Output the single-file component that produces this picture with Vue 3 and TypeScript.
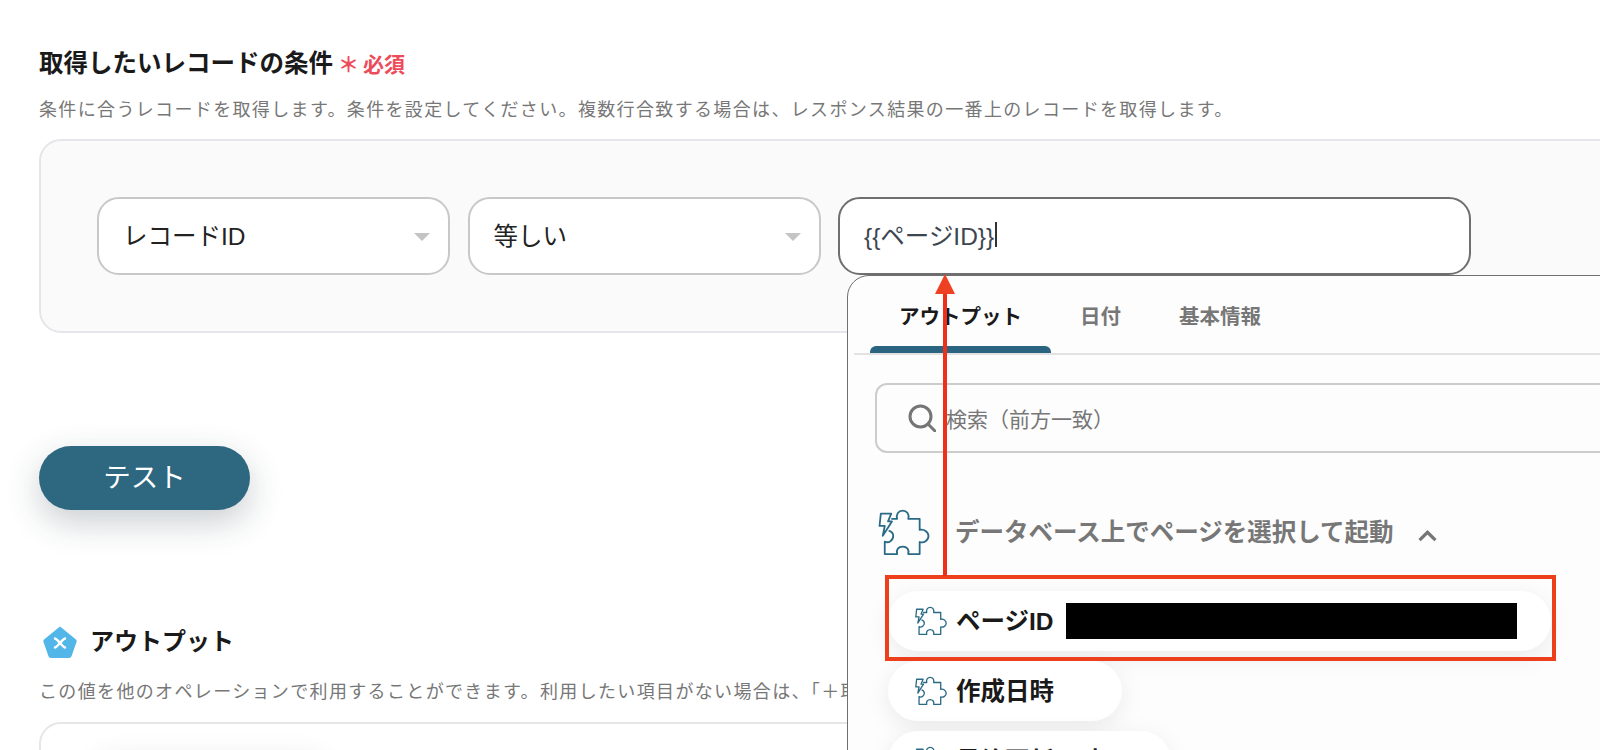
<script setup lang="ts">
const tokenText: string = '{{ページID}}'
const tabs: string[] = ['アウトプット', '日付', '基本情報']
const outputs: { label: string; value?: boolean }[] = [
  { label: 'ページID', value: true },
  { label: '作成日時' },
  { label: '最終更新日時' },
]
</script>

<template>
  <div class="page">
    <svg class="defs" width="0" height="0" aria-hidden="true">
      <symbol id="puzzle" viewBox="38 40 158 144">
        <path d="M78 70 H96 C92 56 100 45 113 45 C126 45 134 56 130 70 H165 V104 C178 100 192 110 192 123 C192 136 178 146 165 141 V178 H130 C134 164 126 155 113 155 C100 155 92 164 96 178 H58 V140 C70 146 84 136 84 123 C84 114 78 108 70 106" />
        <path d="M46 54 H78 L68 78 H80 L52 122 L58 92 H42 Z" />
      </symbol>
    </svg>

    <section class="section">
      <h2 class="title">取得したいレコードの条件<span class="req"><span class="star">＊</span>必須</span></h2>
      <p class="note first">条件に合うレコードを取得します。条件を設定してください。複数行合致する場合は、レスポンス結果の一番上のレコードを取得します。</p>
      <div class="cond-box">
        <div class="field select">レコードID</div>
        <div class="field select">等しい</div>
        <div class="field input">{{ tokenText }}<span class="caret"></span></div>
      </div>
    </section>

    <button class="test-btn" type="button"><span>テスト</span></button>

    <section class="output">
      <div class="out-head">
        <svg class="pentagon" viewBox="0 0 36 34">
          <path d="M18 1.5 L34 14.5 Q35 15.4 34.6 16.8 L29.6 31 Q29 33 27 33 H9 Q7 33 6.4 31 L1.4 16.8 Q1 15.4 2 14.5 Z" fill="#52b7e8" />
          <path d="M13 13.5 C15.5 14 20.5 22 23 22.5 M23 13.5 C20.5 14 15.5 22 13 22.5" fill="none" stroke="#fff" stroke-width="2.4" stroke-linecap="round" />
        </svg>
        <h2 class="title out-title">アウトプット</h2>
      </div>
      <p class="note clipped">この値を他のオペレーションで利用することができます。利用したい項目がない場合は、「＋取</p>
      <div class="out-box">
        <div class="out-pill"></div>
      </div>
    </section>

    <div class="panel">
      <div class="tabs">
        <div v-for="(t, i) in tabs" :key="t" class="tab" :class="{ active: i === 0 }">{{ t }}</div>
      </div>
      <div class="search">
        <svg class="search-icon" viewBox="0 0 28 28" fill="none" stroke="#757575" stroke-width="3">
          <circle cx="12.5" cy="12.5" r="10.5" />
          <path d="M20 20 L27 27" stroke-linecap="round" />
        </svg>
        <span>検索（前方一致）</span>
      </div>
      <div class="group">
        <svg class="puzzle big"><use href="#puzzle" /></svg>
        <span class="group-name">データベース上でページを選択して起動</span>
        <svg class="chevron" viewBox="0 0 18 11" fill="none" stroke="#757575" stroke-width="3">
          <path d="M1.5 9.5 L9 2 L16.5 9.5" />
        </svg>
      </div>
      <div class="items">
        <div v-for="o in outputs" :key="o.label" class="item" :class="{ wide: o.value }">
          <svg class="puzzle small"><use href="#puzzle" /></svg>
          <span class="item-label">{{ o.label }}</span>
          <span v-if="o.value" class="redact"></span>
        </div>
      </div>
    </div>

    <div class="highlight"></div>
    <div class="arrow-line"></div>
    <div class="arrow-head"></div>
  </div>
</template>

<style scoped>
.page {
  position: relative;
  width: 1600px;
  height: 750px;
  overflow: hidden;
  box-sizing: border-box;
  padding: 47px 0 0 39px;
  background: #fff;
  font-family: "Liberation Sans", "Noto Sans CJK JP", sans-serif;
  color: #111;
}
.defs { position: absolute; }
.section, .output { width: 1700px; }
.title {
  margin: 0;
  font-size: 24.5px;
  line-height: 34px;
  font-weight: 700;
  color: #1a1a1a;
  white-space: nowrap;
}
.out-title { font-size: 24px; }
.req {
  margin-left: 5px;
  font-size: 21px;
  color: #ee4b5a;
}
.star { margin-right: 4px; font-size: 21px; }
.note {
  margin: 0;
  font-size: 18px;
  line-height: 28px;
  letter-spacing: 1.35px;
  color: #777;
  white-space: nowrap;
}
.note.first { margin-top: 14px; }
.note.clipped {
  width: 808px;
  margin-top: 19px;
  overflow: hidden;
}
.cond-box {
  display: flex;
  gap: 17.5px;
  box-sizing: border-box;
  height: 194px;
  margin-top: 15px;
  padding: 56px 0 0 56px;
  background: #fafafa;
  border: 2px solid #e4e6ea;
  border-radius: 22px;
}
.field {
  position: relative;
  display: flex;
  align-items: center;
  box-sizing: border-box;
  height: 78px;
  padding: 0 0 4px 24px;
  background: #fff;
  border: 2px solid #c8c8c8;
  border-radius: 22px;
  font-size: 24.5px;
  color: #222;
}
.select { width: 353px; }
.select::after {
  content: "";
  position: absolute;
  right: 18px;
  top: 34px;
  border-left: 8px solid transparent;
  border-right: 8px solid transparent;
  border-top: 8px solid #c4c4c4;
}
.input {
  width: 633px;
  border-color: #6f6f6f;
  color: #3d4650;
}
.caret {
  width: 1.5px;
  height: 25px;
  margin-left: 1px;
  background: #333;
}
.test-btn {
  display: block;
  width: 211px;
  height: 64px;
  margin-top: 113px;
  padding: 0 0 6px;
  border: 0;
  border-radius: 32px;
  background: #2e6780;
  box-shadow: 0 12px 34px rgba(30, 50, 60, 0.24);
  color: #fff;
  font: inherit;
  font-size: 27.5px;
}
.output { margin-top: 115px; }
.out-head {
  display: flex;
  align-items: center;
  gap: 12px;
  padding-left: 3px;
}
.pentagon { width: 36px; height: 34px; flex: none; }
.out-box {
  box-sizing: border-box;
  height: 120px;
  margin-top: 16px;
  padding: 34px 0 0 50px;
  background: #fff;
  border: 2px solid #e6e6e6;
  border-radius: 22px;
}
.out-pill {
  width: 240px;
  height: 50px;
  border-radius: 25px;
  box-shadow: 0 0 30px rgba(0, 0, 0, 0.09);
}

.panel {
  position: absolute;
  left: 847px;
  top: 275px;
  box-sizing: border-box;
  width: 900px;
  height: 600px;
  padding: 0 6px;
  background: #fdfdfd;
  border: 1.5px solid #6f6f6f;
  border-radius: 22px 0 0 0;
}
.tabs {
  display: flex;
  height: 77px;
  padding-left: 16px;
  border-bottom: 2px solid #e2e2e2;
}
.tab {
  position: relative;
  padding: 26px 29px 0;
  font-size: 20.5px;
  line-height: 30px;
  font-weight: 700;
  color: #777;
  white-space: nowrap;
}
.tab.active { color: #1a1a1a; }
.tab.active::after {
  content: "";
  position: absolute;
  left: 0;
  right: 0;
  bottom: 0;
  height: 7px;
  border-radius: 6px 6px 0 0;
  background: #2a6480;
}
.search {
  display: flex;
  align-items: center;
  gap: 10px;
  box-sizing: border-box;
  height: 70px;
  margin: 28px 0 0 21px;
  padding-left: 31px;
  border: 2px solid #ccc;
  border-radius: 12px;
  font-size: 21px;
  color: #777;
}
.search-icon { width: 28px; height: 28px; }
.group {
  display: flex;
  align-items: center;
  height: 46px;
  margin: 56px 0 0 24px;
}
.puzzle {
  display: block;
  flex: none;
  fill: none;
  stroke: #2a6a85;
  stroke-linejoin: round;
}
.puzzle.big { width: 52px; height: 47px; stroke-width: 5.5; }
.puzzle.small { width: 32px; height: 30px; stroke-width: 6.5; }
.group-name {
  margin: -3px 0 0 25px;
  font-size: 24.5px;
  font-weight: 700;
  color: #777;
  white-space: nowrap;
}
.chevron { width: 19px; height: 12px; margin: 7px 0 0 24px; }
.items {
  display: flex;
  flex-direction: column;
  align-items: flex-start;
  gap: 10px;
  margin: 36px 0 0 34px;
}
.item {
  display: flex;
  align-items: center;
  gap: 9px;
  height: 60px;
  padding: 0 68px 0 27px;
  background: #fff;
  border-radius: 30px;
  box-shadow: 0 6px 24px rgba(0, 0, 0, 0.08);
  font-size: 24.5px;
  font-weight: 700;
  color: #1a1a1a;
  white-space: nowrap;
}
.item-label { margin-top: -4px; }
.item.wide { padding-right: 34px; }
.redact {
  width: 451px;
  height: 36px;
  margin-left: 3px;
  background: #000;
}

.highlight {
  position: absolute;
  left: 885px;
  top: 575px;
  box-sizing: border-box;
  width: 671px;
  height: 86px;
  border: 4px solid #ee3f1c;
}
.arrow-line {
  position: absolute;
  left: 943px;
  top: 292px;
  width: 4px;
  height: 284px;
  background: #ee2f1c;
}
.arrow-head {
  position: absolute;
  left: 934.5px;
  top: 274px;
  border-left: 10.5px solid transparent;
  border-right: 10.5px solid transparent;
  border-bottom: 20px solid #ee4123;
}
</style>

<style>
html, body { margin: 0; overflow: hidden; }
</style>
